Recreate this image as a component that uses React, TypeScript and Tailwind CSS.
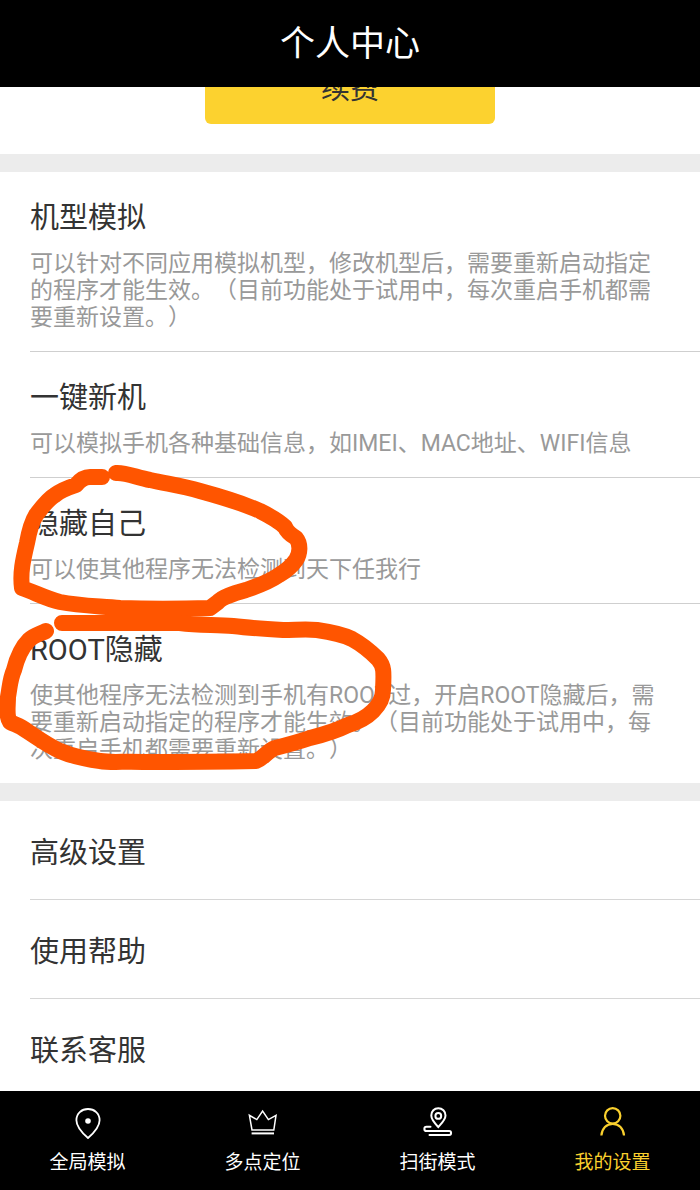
import { ReactNode } from 'react';

interface Feature {
    title: string;
    description: string;
}

interface Tab {
    label: string;
    icon: ReactNode;
    active?: boolean;
}

const features: Feature[] = [
    {
        title: '机型模拟',
        description: '可以针对不同应用模拟机型，修改机型后，需要重新启动指定的程序才能生效。（目前功能处于试用中，每次重启手机都需要重新设置。）',
    },
    {
        title: '一键新机',
        description: '可以模拟手机各种基础信息，如IMEI、MAC地址、WIFI信息',
    },
    {
        title: '隐藏自己',
        description: '可以使其他程序无法检测到天下任我行',
    },
    {
        title: 'ROOT隐藏',
        description: '使其他程序无法检测到手机有ROOT过，开启ROOT隐藏后，需要重新启动指定的程序才能生效。（目前功能处于试用中，每次重启手机都需要重新设置。）',
    },
];

const links = ['高级设置', '使用帮助', '联系客服'];

function Icon({ children }: { children: ReactNode }) {
    return (
        <svg className="size-8" viewBox="0 0 32 32" fill="none" stroke="currentColor" strokeWidth="1.8" aria-hidden="true">
            {children}
        </svg>
    );
}

const tabs: Tab[] = [
    {
        label: '全局模拟',
        icon: (
            <Icon>
                <path d="M16 31C12 27.5 4.4 20.5 4.4 13.2C4.4 6.5 9.6 2 16 2S27.6 6.5 27.6 13.2C27.6 20.5 20 27.5 16 31Z" />
                <circle cx="16" cy="14" r="2.8" fill="currentColor" stroke="none" />
            </Icon>
        ),
    },
    {
        label: '多点定位',
        icon: (
            <Icon>
                <path strokeWidth="1.5" d="M5 23L2.4 8.3L9.8 12.6L15.6 4L21.4 12.6L29 8.3L26.800 23Z" />
                <path strokeWidth="2" d="M4.600 26.400H27" />
            </Icon>
        ),
    },
    {
        label: '扫街模式',
        icon: (
            <Icon>
                <path strokeWidth="2" d="M16.3 20C13.5 17 9.3 12.8 9.3 8.5C9.3 4.3 12.3 1.2 16.3 1.2S23.5 4.3 23.5 8.5C23.5 12.8 19.1 17 16.3 20Z" />
                <circle cx="16.3" cy="8.9" r="2.9" strokeWidth="2" />
                <path strokeWidth="2" strokeLinecap="round" d="M8.500 19.800H4.500A2.150 2.150 0 0 0 4.500 24.100H27.200A1.900 1.900 0 0 1 27.200 27.900H7.500" />
            </Icon>
        ),
    },
    {
        label: '我的设置',
        active: true,
        icon: (
            <Icon>
                <circle cx="15.7" cy="8.8" r="7.7" strokeWidth="2.200" />
                <path strokeWidth="2.200" d="M4.400 28.500C4.900 21.500 9.500 16.800 15.700 16.800S26.500 21.500 27 28.500" />
            </Icon>
        ),
    },
];

// Hand drawn marks around the two hiding features
function Marks() {
    return (
        <svg
            className="pointer-events-none absolute left-0 top-[288px] h-[320px] w-[400px]"
            viewBox="0 460 400 320"
            fill="none"
            stroke="#ff5500"
            strokeWidth="16"
            strokeLinecap="round"
            strokeLinejoin="round"
            aria-hidden="true"
        >
            <path d="M116 473C125 472 138 478 150 480C168 484 183 486 200 491C222 497 242 503 260 511C270 516 280 522 285 527C287 532 291 535 296 538C301 544 300 554 296 560C291 567 286 571 279 575C269 582 258 586 246 590C232 594 222 597 218 602L210 608C180 609 145 609 120 608C100 606 80 606 60 602C47 599 36 593 22 588C20 573 23 560 27 543C29 532 31 523 36 515C43 506 48 499 55 495C61 490 70 487 76 485C80 480 84 477 90 477H102" />
            <path d="M62 623H180C200 626 217 624 233 626C250 628 266 629 283 630C296 630 306 629 317 630C331 632 342 634 352 639C363 645 371 652 378 659C384 666 384 671 383 690C383 699 379 705 373 711C366 718 358 722 348 725C334 732 322 735 310 738C298 742 287 745 275 748C267 751 264 758 256 761C210 762 170 762 143 762C125 761 112 763 100 761C84 759 72 756 60 751C47 745 38 738 27 731C21 726 16 725 10 722C6 716 8 707 8 697C10 686 10 679 14 670C17 658 21 648 29 640C34 635 40 634 46 631" />
        </svg>
    );
}

function App() {
    return (
        <div className="flex min-h-screen flex-col bg-white font-[Roboto,'Noto_Sans_CJK_SC',sans-serif] text-[#333333]" lang="zh-CN">
            <header className="sticky top-0 z-10 flex h-[87px] items-center justify-center bg-black pt-0.5 text-white">
                <h1 className="text-[35px] leading-[48px]">个人中心</h1>
            </header>

            <main className="flex-1">
                {/* The renew button is scrolled halfway under the header */}
                <section className="flex justify-center overflow-hidden pb-[30px]">
                    <button type="button" className="-mt-[33px] h-[70px] w-[290px] rounded-md bg-[#fcd22f] text-[29px] leading-8">
                        续费
                    </button>
                </section>

                <div className="h-[18px] bg-[#ececec]" />

                <section className="relative pl-[30px]">
                    {features.map((feature) => (
                        <article key={feature.title} className="border-b border-[#cfcfcf] pt-[30px] pr-[30px] pb-5 last-of-type:border-b-0">
                            <h2 className="text-[29px] leading-8">{feature.title}</h2>
                            <p className="mt-4 text-[23px] leading-[27px] text-[#999999] [text-spacing-trim:space-all]">{feature.description}</p>
                        </article>
                    ))}
                    <Marks />
                </section>

                <div className="h-[18px] bg-[#ececec]" />

                <section className="pl-[30px]">
                    {links.map((link) => (
                        <a key={link} href="#" className="block border-b border-[#d6d6d6] pt-9 pb-[30px] text-[29px] leading-8 last:border-b-0 last:pb-6">
                            {link}
                        </a>
                    ))}
                </section>
            </main>

            <nav className="sticky bottom-0 z-10 grid grid-cols-4 bg-black">
                {tabs.map((tab) => (
                    <a
                        key={tab.label}
                        href="#"
                        className={`flex flex-col items-center pt-4 pb-[15px] ${tab.active ? 'text-[#fad02e]' : 'text-white'}`}
                    >
                        {tab.icon}
                        <span className="mt-3 text-[19px] leading-6">{tab.label}</span>
                    </a>
                ))}
            </nav>
        </div>
    );
}

export default App;
